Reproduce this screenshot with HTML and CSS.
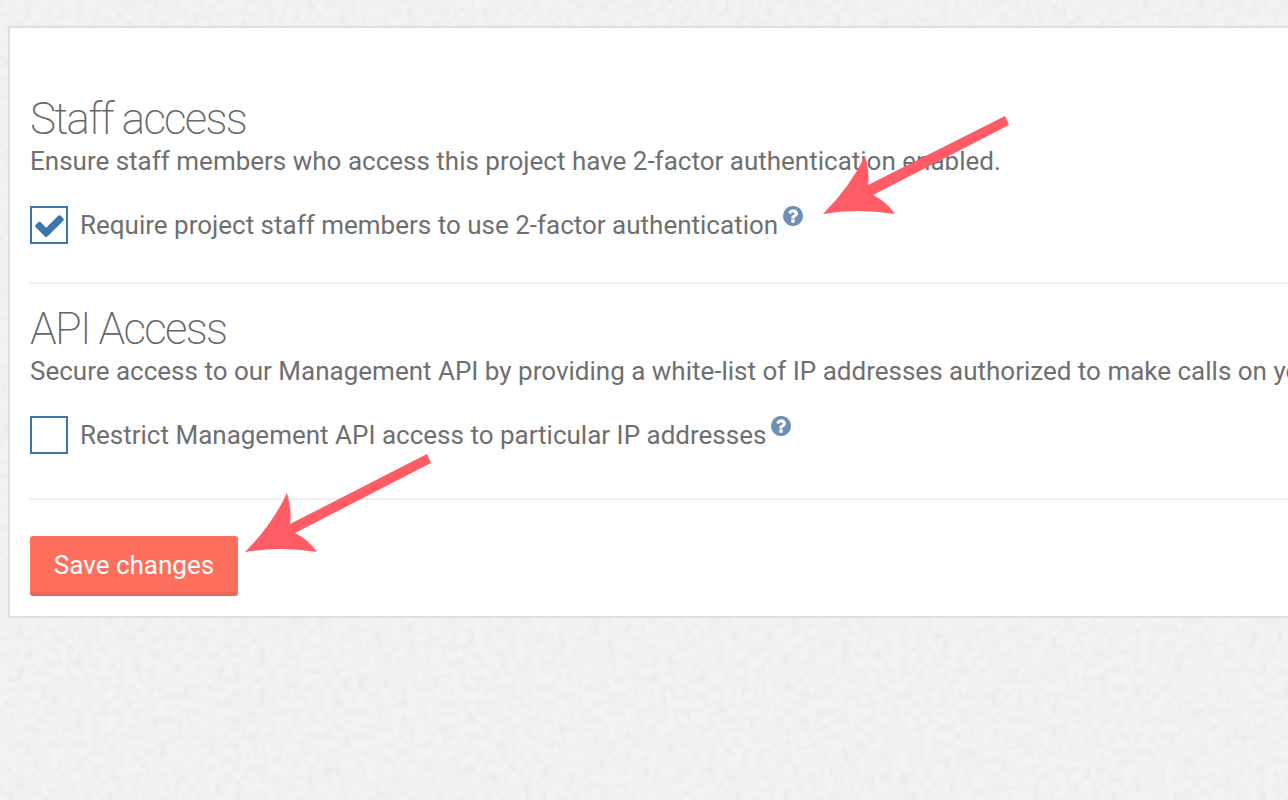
FILE: index.html
```html
<!DOCTYPE html>
<html lang="en">
<head>
<meta charset="utf-8">
<title>Project security</title>
<link rel="stylesheet" href="styles.css">
</head>
<body>
<svg class="paper" aria-hidden="true">
  <filter id="grain" x="0" y="0" width="100%" height="100%" color-interpolation-filters="sRGB">
    <feTurbulence type="fractalNoise" baseFrequency="0.12" numOctaves="2" seed="4"/>
    <feColorMatrix type="matrix" values="0 0 0 0 0.89  0 0 0 0 0.89  0 0 0 0 0.89  0.8 0 0 0 -0.26"/>
  </filter>
  <rect width="100%" height="100%" filter="url(#grain)"/>
</svg>
<main class="card">
  <section class="group group-staff">
    <h2 class="title">Staff access</h2>
    <p class="desc">Ensure staff members who access this project have 2-factor authentication enabled.</p>
    <div class="option">
      <span class="box">
        <svg class="check" viewBox="0 0 1792 1792" aria-hidden="true"><path d="M1671 566q0 40-28 68l-724 724-136 136q-28 28-68 28t-68-28l-136-136-362-362q-28-28-28-68t28-68l136-136q28-28 68-28t68 28l294 295 656-657q28-28 68-28t68 28l136 136q28 28 28 68z"/></svg>
      </span>
      <span class="label">Require project staff members to use 2-factor authentication</span>
      <svg class="help" viewBox="128 128 1536 1536" aria-hidden="true"><path d="M1024 1376v-192q0-14-9-23t-23-9h-192q-14 0-23 9t-9 23v192q0 14 9 23t23 9h192q14 0 23-9t9-23zm256-672q0-88-55.5-163t-138.5-116-170-41q-243 0-371 213-15 24 8 42l132 100q7 6 19 6 16 0 25-12 53-68 86-92 34-24 86-24 48 0 85.5 26t37.5 59q0 38-20 61t-68 45q-63 28-115.5 86.5t-52.5 125.5v36q0 14 9 23t23 9h192q14 0 23-9t9-23q0-19 21.5-49.5t54.5-49.5q32-18 49-28.5t46-35 44.5-48 28-60.5 12.5-81zm384 192q0 209-103 385.5t-279.5 279.5-385.5 103-385.5-103-279.5-279.5-103-385.5 103-385.5 279.5-279.5 385.5-103 385.5 103 279.5 279.5 103 385.5z"/></svg>
    </div>
  </section>
  <section class="group group-api">
    <h2 class="title">API Access</h2>
    <p class="desc">Secure access to our Management API by providing a white-list of IP addresses authorized to make calls on your behalf.</p>
    <div class="option">
      <span class="box"></span>
      <span class="label">Restrict Management API access to particular IP addresses</span>
      <svg class="help" viewBox="128 128 1536 1536" aria-hidden="true"><path d="M1024 1376v-192q0-14-9-23t-23-9h-192q-14 0-23 9t-9 23v192q0 14 9 23t23 9h192q14 0 23-9t9-23zm256-672q0-88-55.5-163t-138.5-116-170-41q-243 0-371 213-15 24 8 42l132 100q7 6 19 6 16 0 25-12 53-68 86-92 34-24 86-24 48 0 85.5 26t37.5 59q0 38-20 61t-68 45q-63 28-115.5 86.5t-52.5 125.5v36q0 14 9 23t23 9h192q14 0 23-9t9-23q0-19 21.5-49.5t54.5-49.5q32-18 49-28.5t46-35 44.5-48 28-60.5 12.5-81zm384 192q0 209-103 385.5t-279.5 279.5-385.5 103-385.5-103-279.5-279.5-103-385.5 103-385.5 279.5-279.5 385.5-103 385.5 103 279.5 279.5 103 385.5z"/></svg>
    </div>
  </section>
  <div class="actions">
    <button class="save" type="button">Save changes</button>
  </div>
</main>
<svg class="arrows" viewBox="0 0 1288 800" aria-hidden="true">
  <path d="M245 552Q272 525 287 493Q292 510 290 524L427 454L431 463L295 533Q309 540 317 552Q280 546 245 552Z"/>
  <path d="M823 214Q850 187 865 156Q870 172 868 185L1005 116L1009 125L873 195Q887 202 895 214Q858 208 823 214Z"/>
</svg>
</body>
</html>
```
FILE: styles.css
```css
* { box-sizing: border-box; }
html, body { height: 100%; }
body {
  margin: 0;
  overflow: hidden;
  background: #f3f3f3;
  font-family: Roboto, "Liberation Sans", sans-serif;
  color: #6f6f6f;
  padding: 26px 0 0 8px;
}
.paper {
  position: absolute;
  left: 0;
  top: 0;
  width: 1288px;
  height: 800px;
}
.card {
  position: relative;
  width: 1400px;
  height: 592px;
  background: #fff;
  border: 2px solid #dfdfdf;
  padding: 0 0 0 20px;
  white-space: nowrap;
}
.group { border-bottom: 2px solid #eee; }
.group-staff { height: 256px; padding-top: 63px; }
.group-api { height: 216px; padding-top: 17px; }
.title {
  margin: 0;
  font-size: 44px;
  line-height: 56px;
  font-weight: 200;
  letter-spacing: -1.75px;
  color: #666;
}
.desc {
  margin: -2px 0 0;
  font-size: 26px;
  line-height: 32px;
}
.option {
  display: flex;
  align-items: flex-start;
  margin-top: 29px;
}
.box {
  width: 38px;
  height: 38px;
  border: 2px solid #3a76ad;
  display: flex;
  align-items: center;
  justify-content: center;
  flex: none;
}
.check { width: 33px; height: 33px; fill: #3a76ad; }
.label {
  margin-left: 12px;
  font-size: 26px;
  line-height: 38px;
}
.help {
  width: 20px;
  height: 20px;
  margin: 0 0 0 5px;
  fill: #6f90b6;
  flex: none;
}
.actions { padding-top: 36px; }
.save {
  display: block;
  width: 208px;
  height: 60px;
  border: 0;
  border-bottom: 4px solid #ee6556;
  border-radius: 3px;
  background: #ff6f5e;
  color: #fff;
  font: 400 26px Roboto, sans-serif;
  padding: 2px 0 0;
}
.arrows {
  position: absolute;
  left: 0;
  top: 0;
  width: 1288px;
  height: 800px;
  fill: #ff5c66;
  pointer-events: none;
}
```
